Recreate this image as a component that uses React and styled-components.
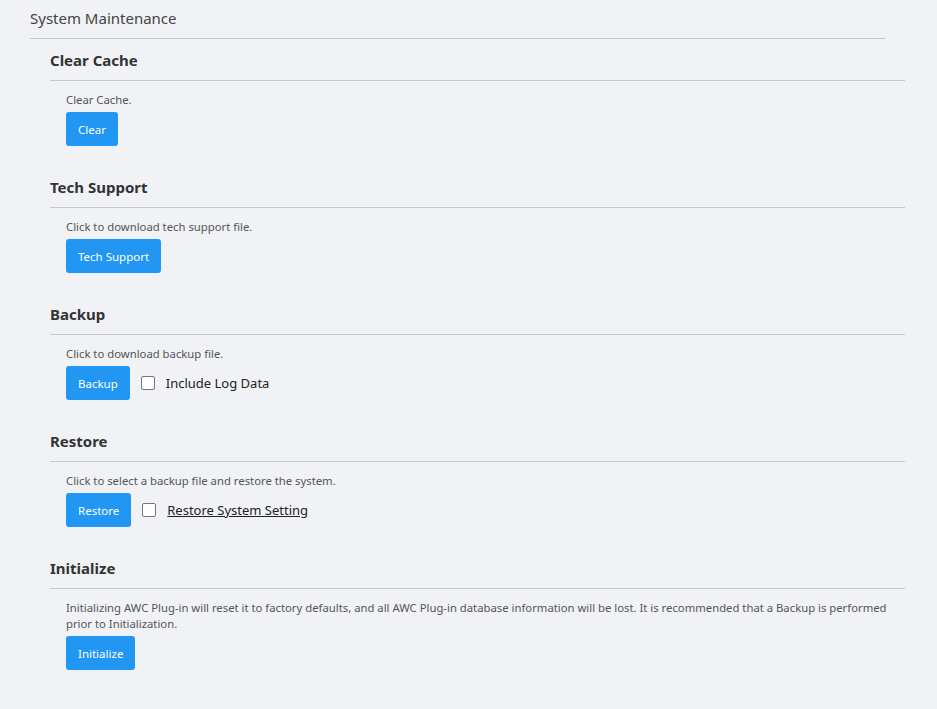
import React from "react"
import styled, { createGlobalStyle } from "styled-components"

const Global = createGlobalStyle`
  body {
    margin: 0;
    background: #f0f2f6;
    font-family: "Noto Sans", "Open Sans", sans-serif;
    color: #333;
  }
`

const Page = styled.div`
  padding: 0 0 20px 30px;
`

const PageTitle = styled.div`
  width: 855px;
  height: 39px;
  box-sizing: border-box;
  padding-top: 8px;
  font-size: 15px;
  color: #444;
  border-bottom: 1px solid #c8c8cc;
`

const Section = styled.div`
  width: 855px;
  margin-left: 20px;
  margin-bottom: 20px;
`

const SectionTitle = styled.div`
  height: 41px;
  display: flex;
  align-items: center;
  font-size: 15px;
  font-weight: 700;
  color: #333;
  border-bottom: 1px solid #c8c8cc;
`

const Body = styled.div`
  padding: 11px 0 0 16px;
`

const Desc = styled.div`
  font-size: 11.3px;
  line-height: 16px;
  color: #555;
  margin-bottom: 4px;
`

const Row = styled.div`
  display: flex;
  align-items: center;
`

const Button = styled.button`
  height: 34px;
  padding: 0 12px;
  border: none;
  border-radius: 3px;
  background: #2196f3;
  color: #fff;
  font-family: inherit;
  font-size: 11.5px;
  cursor: pointer;
`

const Check = styled.label`
  display: flex;
  align-items: center;
  margin-left: 11px;
  font-size: 13px;
  color: #222;
  text-decoration: ${p => (p.$underline ? "underline" : "none")};
`

const Box = styled.span`
  width: 12px;
  height: 12px;
  border: 1px solid #767676;
  border-radius: 2px;
  background: #fff;
  margin-right: 11px;
`

const sections = [
  { title: "Clear Cache", desc: "Clear Cache.", btn: "Clear" },
  { title: "Tech Support", desc: "Click to download tech support file.", btn: "Tech Support" },
  { title: "Backup", desc: "Click to download backup file.", btn: "Backup", check: "Include Log Data" },
  {
    title: "Restore",
    desc: "Click to select a backup file and restore the system.",
    btn: "Restore",
    check: "Restore System Setting",
    underline: true,
  },
  {
    title: "Initialize",
    desc: "Initializing AWC Plug-in will reset it to factory defaults, and all AWC Plug-in database information will be lost. It is recommended that a Backup is performed prior to Initialization.",
    btn: "Initialize",
  },
]

export default function App() {
  return (
    <Page>
      <Global />
      <PageTitle>System Maintenance</PageTitle>
      {sections.map(s => (
        <Section key={s.title}>
          <SectionTitle>{s.title}</SectionTitle>
          <Body>
            <Desc>{s.desc}</Desc>
            <Row>
              <Button>{s.btn}</Button>
              {s.check && (
                <Check $underline={s.underline}>
                  <Box />
                  {s.check}
                </Check>
              )}
            </Row>
          </Body>
        </Section>
      ))}
    </Page>
  )
}
